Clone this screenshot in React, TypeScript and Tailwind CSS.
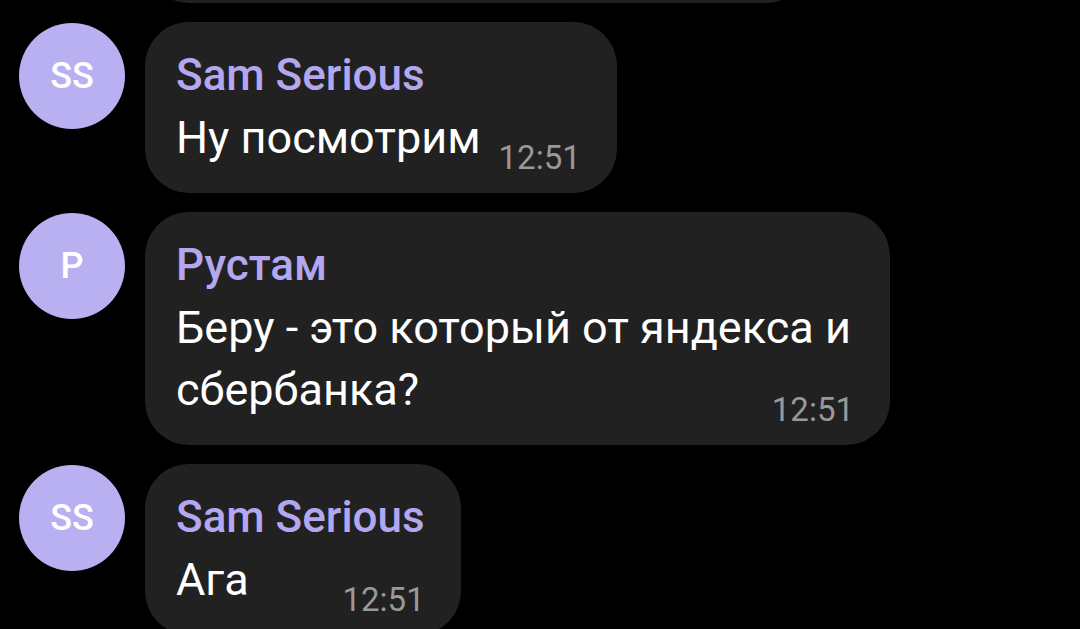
import React from "react";

type Msg = {
  initials: string;
  name: string;
  text: string;
  time: string;
  wide?: boolean;
};

const messages: Msg[] = [
  { initials: "SS", name: "Sam Serious", text: "Ну посмотрим", time: "12:51" },
  {
    initials: "P",
    name: "Рустам",
    text: "Беру - это который от яндекса и сбербанка?",
    time: "12:51",
    wide: true,
  },
  { initials: "SS", name: "Sam Serious", text: "Ага", time: "12:51" },
];

const Row = ({ m }: { m: Msg }) => (
  <div className="flex items-start gap-[20px] pl-[19px]">
    <div className="mt-[1px] flex h-[106px] w-[106px] shrink-0 items-center justify-center rounded-full bg-[#b9b0f2] text-[36px] font-medium text-white">
      {m.initials}
    </div>
    <div
      className={
        "flow-root rounded-[44px] bg-[#212121] pt-[27px] pr-[36px] pb-[16px] pl-[31px] " +
        (m.wide ? "max-w-[745px]" : "")
      }
    >
      <div className="mb-[6px] text-[44px] leading-[52px] font-medium text-[#b3a7f0]">
        {m.name}
      </div>
      <div className="text-[45px] leading-[62px] text-white">
        {m.text}
        <span className="float-right mt-[32px] ml-[18px] text-[33px] leading-[38px] text-[#999999]">
          {m.time}
        </span>
      </div>
    </div>
  </div>
);

export default function App() {
  return (
    <div className="h-[629px] overflow-hidden bg-black font-['Roboto',sans-serif]">
      <div className="flex flex-col gap-[19px]">
        <div className="ml-[145px] -mt-[97px] h-[100px] w-[665px] rounded-[44px] bg-[#212121]" />
        {messages.map((m, i) => (
          <Row key={i} m={m} />
        ))}
      </div>
    </div>
  );
}
